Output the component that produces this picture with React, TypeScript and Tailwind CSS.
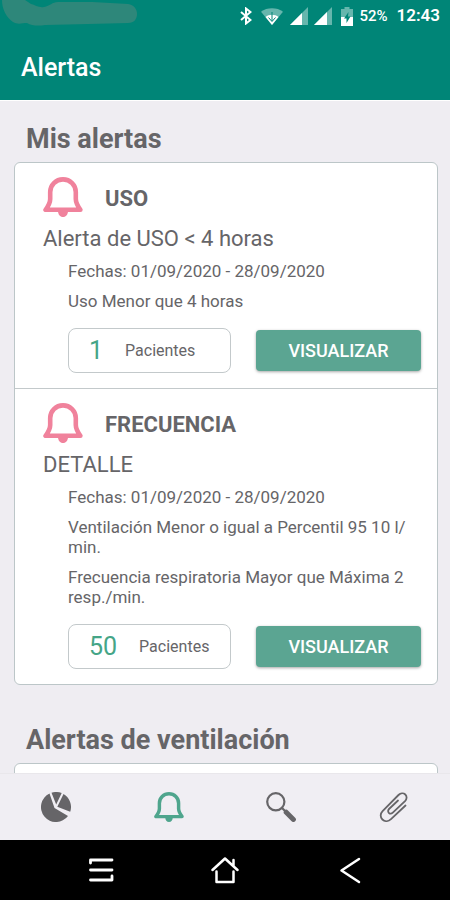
import type { ReactNode } from "react";

type Alert = {
  title: string;
  subtitle: string;
  lines: ReactNode[];
  patients: number;
};

const alerts: Alert[] = [
  {
    title: "USO",
    subtitle: "Alerta de USO < 4 horas",
    lines: ["Fechas: 01/09/2020 - 28/09/2020", "Uso Menor que 4 horas"],
    patients: 1,
  },
  {
    title: "FRECUENCIA",
    subtitle: "DETALLE",
    lines: [
      "Fechas: 01/09/2020 - 28/09/2020",
      <>
        Ventilación Menor o igual a Percentil 95 10 l/
        <wbr />
        min.
      </>,
      "Frecuencia respiratoria Mayor que Máxima 2 resp./min.",
    ],
    patients: 50,
  },
];

function BellIcon({ className }: { className: string }) {
  return (
    <svg viewBox="0 0 40 40" className={className} fill="none" aria-hidden="true">
      <path
        d="M20 2.400c-7.200 0-12.800 5.600-12.800 12.600v7c0 3.800-2 7.200-4.600 10.800h34.800C34.800 29.200 32.800 25.800 32.800 22v-7C32.800 8 27.200 2.400 20 2.400z"
        stroke="currentColor"
        strokeWidth="4.600"
        strokeLinejoin="round"
      />
      <path d="M15 34h10c0 3.400-2 6-5 6s-5-2.600-5-6z" fill="currentColor" />
    </svg>
  );
}

function PieIcon() {
  return (
    <svg viewBox="0 0 30 30" className="size-[30px]" aria-hidden="true">
      <path
        fill="currentColor"
        d="M8.500 1.500A15 15 0 1 0 27 24L13.500 16zM10.500 .7A15 15 0 0 1 20.700 1.100L15.200 12.500zM22.500 2A15 15 0 0 1 29.200 19.800L16.300 14.800z"
      />
    </svg>
  );
}

function SearchIcon() {
  return (
    <svg viewBox="0 0 30 30" className="size-[30px]" fill="none" stroke="currentColor" aria-hidden="true">
      <circle cx="9.800" cy="9.800" r="8.600" strokeWidth="2.200" />
      <path d="M15.800 15.800l3.500 3.500" strokeWidth="2.200" />
      <path d="M20.200 20.200l7.200 7.200" strokeWidth="5" strokeLinecap="round" />
    </svg>
  );
}

function ClipIcon() {
  return (
    <svg
      viewBox="0 0 30 30"
      className="size-[30px]"
      fill="none"
      stroke="currentColor"
      strokeWidth="1.800"
      strokeLinecap="round"
      strokeLinejoin="round"
      aria-hidden="true"
    >
      <path d="M26.500 13.500L12 27.200c-2.600 2.400-6.200 2.600-8.600.3s-2.200-6 .2-8.400L19.500 3c2-2 5-2.200 6.800-.5s1.700 4.600-.3 6.600L13.800 20.600c-1.200 1.100-3 1.200-4 .2s-.9-2.700.2-3.800L19 8.500" />
    </svg>
  );
}

function StatusBar() {
  return (
    <div className="relative flex h-8 items-center justify-end pr-[10px] text-white">
      <svg viewBox="0 0 140 28" className="absolute top-0 left-0 h-7 w-[140px]" aria-hidden="true">
        <path
          d="M2 0c0 9 4 17 11 22 5 3 9 1 14 1 5 3 12 3 18 2l43-1 40-1c6 0 9-4 9-9s-3-9-9-10L92 2 58 2c-6 0-8 4-14 5-5 1-9-2-13-3l-6-4z"
          fill="#2e877a"
        />
      </svg>
      <svg viewBox="0 0 12 18" className="h-[18px] w-3" fill="none" stroke="currentColor" strokeWidth="2" aria-hidden="true">
        <path d="M1 5l9.500 8L6 16.500V1.500L10.500 5 1 13" />
      </svg>
      <svg viewBox="0 0 22 17" className="ml-[9px] h-[17px] w-[22px]" aria-hidden="true">
        <path d="M0 3.800C6-.8 16-.8 22 3.800L11 17z" fill="#fff" opacity=".4" />
        <path d="M4.500 9C8 6 14 6 17.500 9L11 17z" fill="#fff" />
        <path d="M11 4v9M7.500 9.500l3.500 4 3.500-4" fill="none" stroke="#008577" strokeWidth="1" />
      </svg>
      <svg viewBox="0 0 18 18" className="ml-[7px] size-[18px]" aria-hidden="true">
        <path d="M18 0v18H0z" fill="#fff" opacity=".4" />
        <path d="M12 6v12H0z" fill="#fff" />
      </svg>
      <svg viewBox="0 0 18 18" className="ml-[6px] size-[18px]" aria-hidden="true">
        <path d="M18 0v18H0z" fill="#fff" opacity=".4" />
        <path d="M13 5v13H0z" fill="#fff" />
      </svg>
      <svg viewBox="0 0 12 19" className="ml-[9px] h-[19px] w-3" aria-hidden="true">
        <path d="M3.500 0h5v2H12v8H0V2h3.500z" fill="#fff" opacity=".4" />
        <path d="M0 10h12v9H0z" fill="#fff" />
        <path d="M7.500 5L3 11.500h2.500V16L9.500 9.500H7z" fill="#008577" />
      </svg>
      <span className="ml-[6px] text-[15px] font-medium">52%</span>
      <span className="ml-[9px] text-[17px] font-semibold">12:43</span>
    </div>
  );
}

function SectionTitle({ children }: { children: ReactNode }) {
  return <h2 className="mb-[7px] px-3 text-[27px] leading-8 font-bold">{children}</h2>;
}

function AlertItem({ alert }: { alert: Alert }) {
  return (
    <li className="pt-[14px] pr-4 pb-[15px] pl-7">
      <div className="flex items-center">
        <BellIcon className="size-10 shrink-0 text-[#f0829c]" />
        <h3 className="ml-[22px] pt-1 text-[22px] leading-7 font-bold">{alert.title}</h3>
      </div>
      <p className="mt-2 text-[22px] leading-7">{alert.subtitle}</p>
      <div className="mt-2 ml-[25px]">
        <div className="flex flex-col gap-[10px] text-[17px] leading-5">
          {alert.lines.map((line, index) => (
            <p key={index}>{line}</p>
          ))}
        </div>
        <div className="mt-[17px] flex items-center gap-[25px]">
          <div className="flex h-[45px] w-[163px] items-center gap-[22px] rounded-lg border border-[#c3c9cb] pl-5">
            <span className="text-[25px] leading-7 text-[#45a587]">{alert.patients}</span>
            <span className="text-base">Pacientes</span>
          </div>
          <button
            type="button"
            className="h-[41px] flex-1 rounded-sm bg-[#5ba592] text-lg font-medium text-white shadow-[0_1px_3px_rgba(0,0,0,0.35)]"
          >
            VISUALIZAR
          </button>
        </div>
      </div>
    </li>
  );
}

export default function App() {
  return (
    <div className="flex h-screen flex-col bg-[#efedf2] font-[Roboto,sans-serif] text-[#666568]">
      <header className="h-[100px] shrink-0 bg-[#008577] text-white">
        <StatusBar />
        <h1 className="pt-5 pl-[21px] text-[25px] leading-8 font-medium">Alertas</h1>
      </header>

      <main className="min-h-0 flex-1 overflow-y-auto border-t border-white pt-[22px] pr-3 pl-[14px] [scrollbar-width:none]">
        <section>
          <SectionTitle>Mis alertas</SectionTitle>
          <ul className="divide-y divide-[#c3c9cb] rounded-md border border-[#bcc6c8] bg-white">
            {alerts.map((alert) => (
              <AlertItem key={alert.title} alert={alert} />
            ))}
          </ul>
        </section>
        <section className="mt-[39px]">
          <SectionTitle>Alertas de ventilación</SectionTitle>
          <div className="h-40 rounded-md border border-[#bcc6c8] bg-white" />
        </section>
      </main>

      <nav className="grid h-[67px] shrink-0 grid-cols-4 border-t border-[#e9e7eb] bg-[#f0eef3]">
        <button type="button" aria-label="Resumen" className="flex items-center justify-center">
          <PieIcon />
        </button>
        <button type="button" aria-label="Alertas" className="flex items-center justify-center text-[#4fa58d]">
          <BellIcon className="size-[30px]" />
        </button>
        <button type="button" aria-label="Buscar" className="flex items-center justify-center">
          <SearchIcon />
        </button>
        <button type="button" aria-label="Adjuntos" className="flex items-center justify-center">
          <ClipIcon />
        </button>
      </nav>

      <div className="flex h-[60px] shrink-0 items-center justify-center gap-24 bg-black text-white">
        <button type="button" aria-label="Recientes" className="flex w-7 justify-center">
          <svg viewBox="0 0 26 26" className="size-[26px]" fill="none" stroke="currentColor" strokeWidth="2.800" strokeLinecap="round" strokeLinejoin="round" aria-hidden="true">
            <path d="M2.500 6V3h21.500M2.500 13H24M2.500 23H24v-4" />
          </svg>
        </button>
        <button type="button" aria-label="Inicio" className="flex w-7 justify-center">
          <svg viewBox="0 0 28 28" className="size-7" fill="none" stroke="currentColor" strokeWidth="2.500" strokeLinecap="round" strokeLinejoin="round" aria-hidden="true">
            <path d="M1.500 14L14 2.500 26.500 14M22.500 9.500V4M5.500 15.500V26h17V15.500" />
          </svg>
        </button>
        <button type="button" aria-label="Atrás" className="flex w-7 justify-center">
          <svg viewBox="0 0 28 28" className="size-7" fill="none" stroke="currentColor" strokeWidth="2.500" strokeLinecap="round" strokeLinejoin="round" aria-hidden="true">
            <path d="M24 3L6.500 14.500 24 26" />
          </svg>
        </button>
      </div>
    </div>
  );
}
